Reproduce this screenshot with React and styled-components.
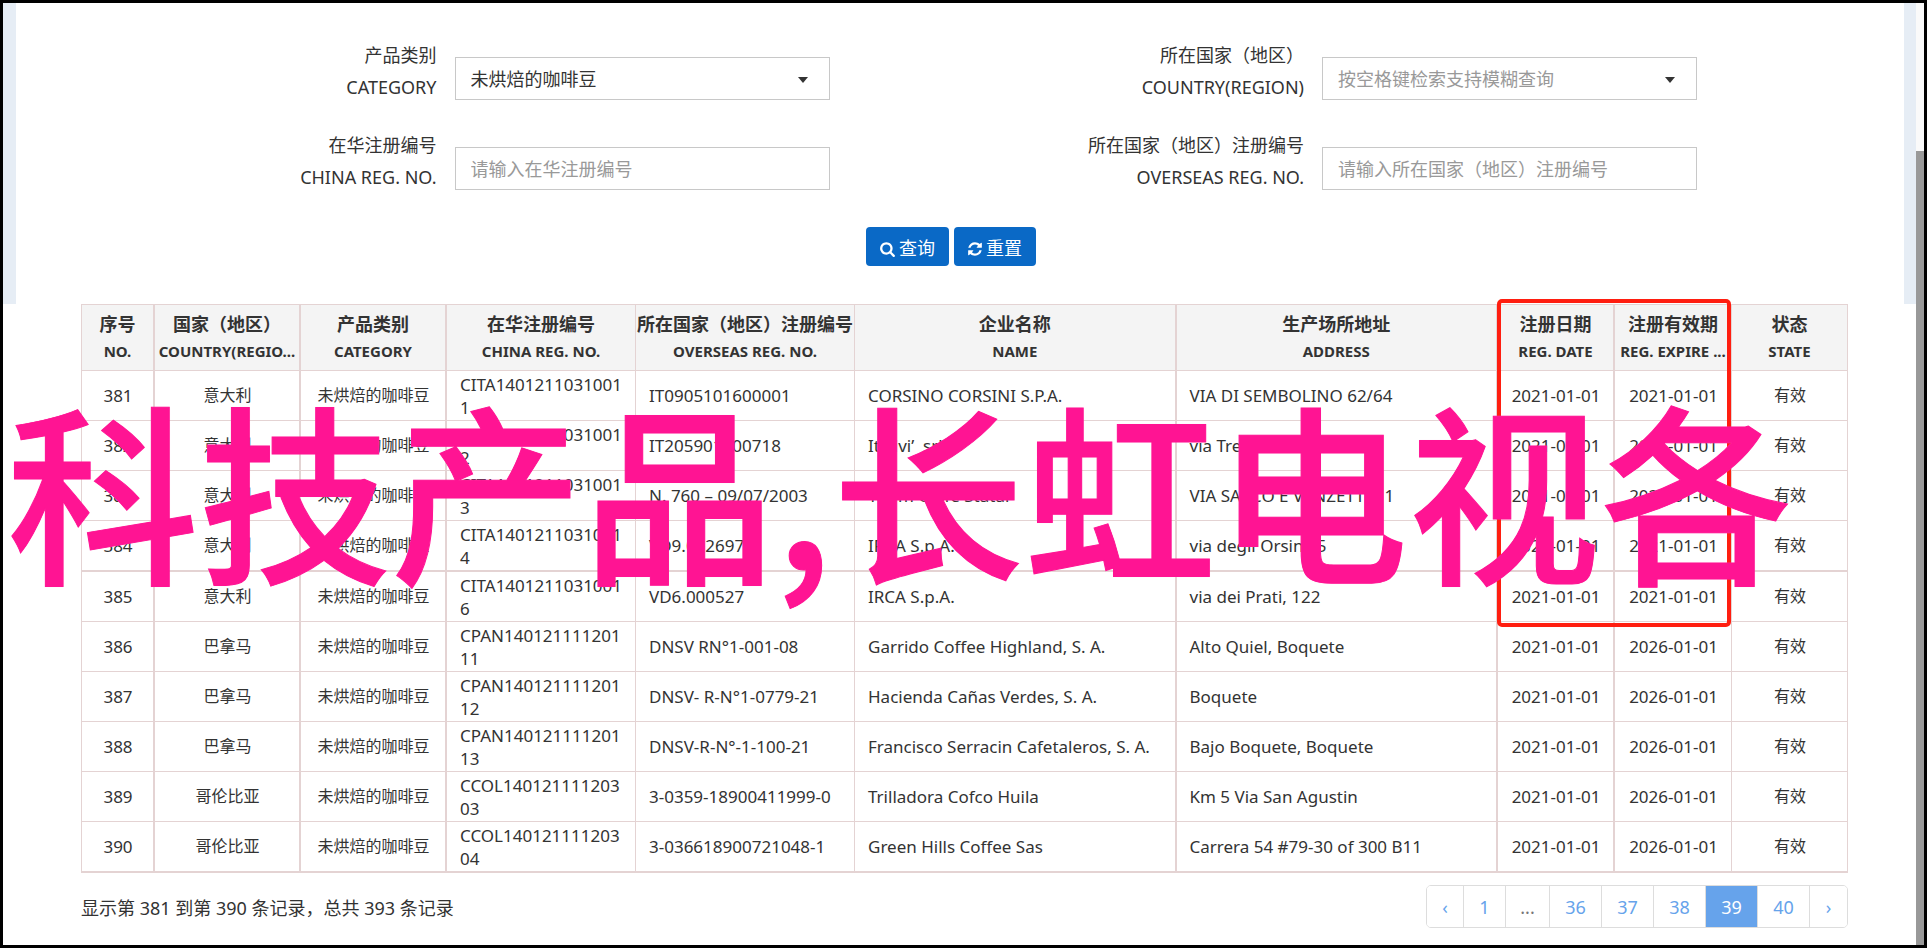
import styled, { createGlobalStyle } from 'styled-components';

const GlobalStyle = createGlobalStyle`
  * {
    box-sizing: border-box;
  }
  body {
    margin: 0;
    background: #fff;
    color: #333;
    font-family: "Noto Sans", "Noto Sans CJK SC", sans-serif;
    font-size: 18px;
  }
`;

const Frame = styled.div`
  position: relative;
  display: flex;
  border: 3px solid #000;
  overflow: hidden;
`;

const Page = styled.main`
  flex: 1;
  min-width: 0;
`;

const ScrollTrack = styled.div`
  display: flex;
  flex-direction: column;
  width: 8px;
  padding-top: 148px;
  background: #fafafa;
`;

const ScrollThumb = styled.div`
  flex: 1;
  background: #999;
`;

const SearchForm = styled.form`
  padding: 36px 0 38px;
  border: solid #e6edf5;
  border-width: 0 12px 0 13px;
`;

const FieldGrid = styled.div`
  display: grid;
  grid-template-columns: 1fr 1fr;
  row-gap: 26px;
  padding: 0 207px 0 32px;
`;

const Field = styled.div`
  display: flex;
  justify-content: flex-end;
  gap: 18px;
  padding-right: ${(props) => (props.$first ? '43px' : '0')};
`;

const Label = styled.label`
  text-align: right;
  line-height: 32px;
  white-space: nowrap;

  span {
    display: block;
  }
`;

const controlStyle = `
  width: 375px;
  height: 43px;
  margin: 18px 0 0;
  padding: 0 15px;
  border: 1px solid #c8c8c8;
  border-radius: 0;
  background: #fff;
  font-family: inherit;
  font-size: 18px;
  outline: none;
`;

const TextInput = styled.input`
  ${controlStyle}
  &::placeholder {
    color: #999;
  }
`;

const SelectBox = styled.div`
  position: relative;

  svg {
    position: absolute;
    top: 38px;
    right: 22px;
    pointer-events: none;
  }
`;

const Select = styled.select`
  ${controlStyle}
  appearance: none;
  color: ${(props) => (props.$empty ? '#999' : '#333')};
`;

const Actions = styled.div`
  display: flex;
  justify-content: center;
  gap: 5px;
  padding: 34px 18px 0 0;
`;

const ActionButton = styled.button`
  display: flex;
  align-items: center;
  gap: 4px;
  height: 39px;
  padding: 0 14px;
  border: 0;
  border-radius: 4px;
  background: #0a69c6;
  color: #fff;
  font-family: inherit;
  font-size: 18px;

  svg {
    margin-top: 4px;
    fill: #fff;
  }
`;

const Results = styled.section`
  padding: 0 68px 17px 78px;
`;

const TableWrap = styled.div`
  position: relative;
`;

const Table = styled.table`
  width: 100%;
  table-layout: fixed;
  border-spacing: 0;
  border-left: 1px solid #e4d3d3;
  border-top: 1px solid #e4d3d3;
`;

const Th = styled.th`
  height: 66px;
  padding: 0;
  border-right: ${(props) => (props.$thick ? 2 : 1)}px solid #e4d3d3;
  border-bottom: 1px solid #e4d3d3;
  background: #f4f4f4;
  font-size: 15px;

  span {
    display: block;
    line-height: 27px;
    white-space: nowrap;
  }
  span:first-child {
    font-size: 18px;
  }
`;

const Row = styled.tr`
  height: ${(props) => (props.$thick ? 51 : 50)}px;

  td {
    border-bottom: ${(props) => (props.$thick ? 2 : 1)}px solid #e4d3d3;
  }
`;

const Td = styled.td`
  padding: 1px 12px 1px 13px;
  border-right: ${(props) => (props.$thick ? 2 : 1)}px solid #e4d3d3;
  text-align: ${(props) => props.$align || 'center'};
  font-size: ${(props) => (props.$cjk ? 16 : 17)}px;
  line-height: 23px;
  white-space: ${(props) => (props.$wrap ? 'normal' : 'nowrap')};
  word-break: break-all;
`;

const HighlightBox = styled.div`
  position: absolute;
  top: -5px;
  right: 117px;
  width: 234px;
  height: 328px;
  border: 4px solid #ff1e10;
  border-radius: 5px;
  pointer-events: none;
`;

const Footer = styled.div`
  display: flex;
  justify-content: space-between;
  align-items: center;
  padding-top: 12px;
`;

const Pagination = styled.nav`
  display: flex;
  height: 43px;
  border: 1px solid #ddd;
  border-radius: 5px;
  overflow: hidden;
`;

const PageLink = styled.a`
  display: flex;
  align-items: center;
  justify-content: center;
  width: ${(props) => props.$width || 52}px;
  border-right: 1px solid #ddd;
  background: ${(props) => (props.$active ? '#66a3eb' : '#fff')};
  color: ${(props) => (props.$active ? '#fff' : '#66a3eb')};
  text-decoration: none;

  &:last-child {
    border-right: 0;
  }
`;

const PageGap = styled(PageLink)`
  color: #777;
`;

const Watermark = styled.div`
  position: absolute;
  top: 343px;
  left: 4px;
  color: #ff1493;
  font-family: "Noto Sans CJK SC", sans-serif;
  font-size: 192px;
  font-weight: 500;
  line-height: 280px;
  white-space: nowrap;
  -webkit-text-stroke: 1px #ff1493;
  text-shadow: 0 0 1px #ffb0dc;
  pointer-events: none;
`;

const columns = [
  { cn: '序号', en: 'NO.', width: 73, thick: true },
  { cn: '国家（地区）', en: 'COUNTRY(REGIO...', width: 146, thick: true, cjk: true },
  { cn: '产品类别', en: 'CATEGORY', width: 146, thick: true, cjk: true },
  { cn: '在华注册编号', en: 'CHINA REG. NO.', width: 189, align: 'left', wrap: true },
  { cn: '所在国家（地区）注册编号', en: 'OVERSEAS REG. NO.', width: 219, align: 'left' },
  { cn: '企业名称', en: 'NAME', align: 'left', thick: true },
  { cn: '生产场所地址', en: 'ADDRESS', align: 'left', thick: true },
  { cn: '注册日期', en: 'REG. DATE', width: 117, thick: true },
  { cn: '注册有效期', en: 'REG. EXPIRE ...', width: 117 },
  { cn: '状态', en: 'STATE', width: 116, cjk: true },
];

const bean = '未烘焙的咖啡豆';

const rows = [
  ['381', '意大利', bean, 'CITA14012110310011', 'IT0905101600001', 'CORSINO CORSINI S.P.A.', 'VIA DI SEMBOLINO 62/64', '2021-01-01', '2021-01-01', '有效'],
  ['382', '意大利', bean, 'CITA14012110310012', 'IT205901000718', 'Italivi’\u00a0 srl', 'via Trento', '2021-01-01', '2021-01-01', '有效'],
  ['383', '意大利', bean, 'CITA14012110310013', 'N. 760 – 09/07/2003', 'Torim Caffè Statal', 'VIA SACCO E VANZETTI 11', '2021-01-01', '2021-01-01', '有效'],
  ['384', '意大利', bean, 'CITA14012110310014', 'VD9.002697', 'IRCA S.p.A.', 'via degli Orsini, 5', '2021-01-01', '2021-01-01', '有效'],
  ['385', '意大利', bean, 'CITA14012110310016', 'VD6.000527', 'IRCA S.p.A.', 'via dei Prati, 122', '2021-01-01', '2021-01-01', '有效'],
  ['386', '巴拿马', bean, 'CPAN14012111120111', 'DNSV RN°1-001-08', 'Garrido Coffee Highland, S. A.', 'Alto Quiel, Boquete', '2021-01-01', '2026-01-01', '有效'],
  ['387', '巴拿马', bean, 'CPAN14012111120112', 'DNSV- R-N°1-0779-21', 'Hacienda Cañas Verdes, S. A.', 'Boquete', '2021-01-01', '2026-01-01', '有效'],
  ['388', '巴拿马', bean, 'CPAN14012111120113', 'DNSV-R-N°-1-100-21', 'Francisco Serracin Cafetaleros, S. A.', 'Bajo Boquete, Boquete', '2021-01-01', '2026-01-01', '有效'],
  ['389', '哥伦比亚', bean, 'CCOL14012111120303', '3-0359-18900411999-0', 'Trilladora Cofco Huila', 'Km 5 Via San Agustin', '2021-01-01', '2026-01-01', '有效'],
  ['390', '哥伦比亚', bean, 'CCOL14012111120304', '3-036618900721048-1', 'Green Hills Coffee Sas', 'Carrera 54 #79-30 of 300 B11', '2021-01-01', '2026-01-01', '有效'],
];

function Caret() {
  return (
    <svg width="10" height="6" viewBox="0 0 10 6">
      <path d="M0 0h10L5 6z" fill="#333" />
    </svg>
  );
}

function SearchIcon() {
  return (
    <svg width="15" height="16" viewBox="0 0 1664 1792">
      <path d="M1152 832q0-185-131.5-316.5t-316.5-131.5-316.5 131.5-131.5 316.5 131.5 316.5 316.5 131.5 316.5-131.5 131.5-316.5zm512 832q0 52-38 90t-90 38q-54 0-90-38l-343-342q-179 124-399 124-143 0-273.5-55.5t-225-150-150-225-55.5-273.5 55.5-273.5 150-225 225-150 273.5-55.5 273.5 55.5 225 150 150 225 55.5 273.5q0 220-124 399l343 343q37 37 37 90z" />
    </svg>
  );
}

function RefreshIcon() {
  return (
    <svg width="14" height="16" viewBox="0 0 1536 1792">
      <path d="M1511 1056q0 5-1 7-64 268-268 434.5t-478 166.5q-146 0-282.5-55t-243.5-157l-129 129q-19 19-45 19t-45-19-19-45v-448q0-26 19-45t45-19h448q26 0 45 19t19 45-19 45l-137 137q71 66 161 102t187 36q134 0 250-65t186-179q11-17 53-117 8-23 30-23h192q13 0 22.5 9.5t9.5 22.5zm25-800v448q0 26-19 45t-45 19h-448q-26 0-45-19t-19-45 19-45l138-138q-148-137-349-137-134 0-250 65t-186 179q-11 17-53 117-8 23-30 23h-199q-13 0-22.5-9.5t-9.5-22.5v-7q65-268 270-434.5t480-166.5q146 0 284 55.5t245 156.5l130-129q19-19 45-19t45 19 19 45z" />
    </svg>
  );
}

function App() {
  return (
    <>
      <GlobalStyle />
      <Frame>
        <Page>
          <SearchForm onSubmit={(e) => e.preventDefault()}>
            <FieldGrid>
              <Field $first>
                <Label htmlFor="category"><span>产品类别</span><span>CATEGORY</span></Label>
                <SelectBox>
                  <Select id="category"><option>未烘焙的咖啡豆</option></Select>
                  <Caret />
                </SelectBox>
              </Field>
              <Field>
                <Label htmlFor="country"><span>所在国家（地区）</span><span>COUNTRY(REGION)</span></Label>
                <SelectBox>
                  <Select id="country" $empty><option>按空格键检索支持模糊查询</option></Select>
                  <Caret />
                </SelectBox>
              </Field>
              <Field $first>
                <Label htmlFor="chinaNo"><span>在华注册编号</span><span>CHINA REG. NO.</span></Label>
                <TextInput id="chinaNo" placeholder="请输入在华注册编号" />
              </Field>
              <Field>
                <Label htmlFor="overseasNo"><span>所在国家（地区）注册编号</span><span>OVERSEAS REG. NO.</span></Label>
                <TextInput id="overseasNo" placeholder="请输入所在国家（地区）注册编号" />
              </Field>
            </FieldGrid>
            <Actions>
              <ActionButton type="submit"><SearchIcon />查询</ActionButton>
              <ActionButton type="reset"><RefreshIcon />重置</ActionButton>
            </Actions>
          </SearchForm>

          <Results>
            <TableWrap>
              <Table>
                <colgroup>
                  {columns.map((c) => <col key={c.en} width={c.width} />)}
                </colgroup>
                <thead>
                  <tr>
                    {columns.map((c) => (
                      <Th key={c.en} $thick={c.thick}><span>{c.cn}</span><span>{c.en}</span></Th>
                    ))}
                  </tr>
                </thead>
                <tbody>
                  {rows.map((row, r) => (
                    <Row key={row[0]} $thick={r === 3 || r === 9}>
                      {row.map((text, i) => (
                        <Td key={i} $thick={columns[i].thick} $align={columns[i].align} $wrap={columns[i].wrap} $cjk={columns[i].cjk}>{text}</Td>
                      ))}
                    </Row>
                  ))}
                </tbody>
              </Table>
              <HighlightBox />
            </TableWrap>
            <Footer>
              <span>显示第 381 到第 390 条记录，总共 393 条记录</span>
              <Pagination aria-label="分页">
                <PageLink href="#prev" $width={37}>‹</PageLink>
                <PageLink href="#1" $width={42}>1</PageLink>
                <PageGap as="span" $width={44}>...</PageGap>
                <PageLink href="#36">36</PageLink>
                <PageLink href="#37">37</PageLink>
                <PageLink href="#38">38</PageLink>
                <PageLink href="#39" $active>39</PageLink>
                <PageLink href="#40">40</PageLink>
                <PageLink href="#next" $width={37}>›</PageLink>
              </Pagination>
            </Footer>
          </Results>
        </Page>
        <ScrollTrack><ScrollThumb /></ScrollTrack>
        <Watermark>科技产品,长虹电视各</Watermark>
      </Frame>
    </>
  );
}

export default App;
